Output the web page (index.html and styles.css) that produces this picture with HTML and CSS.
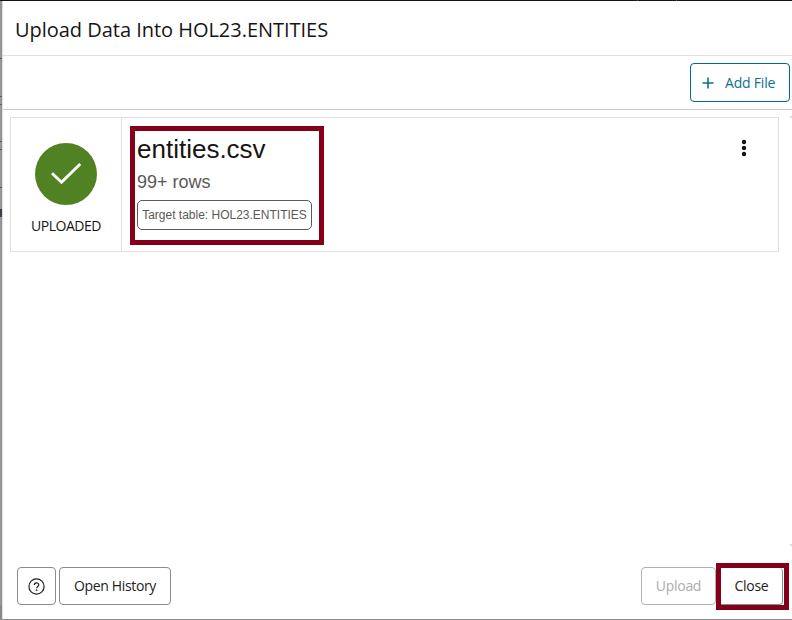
FILE: index.html
```html
<!DOCTYPE html>
<html lang="en">
<head>
<meta charset="utf-8">
<title>Upload Data</title>
<link rel="stylesheet" href="styles.css">
</head>
<body>
<div class="backdrop">
  <i class="mark m1"></i><i class="mark m2"></i><i class="mark m3"></i><i class="mark m4"></i><i class="mark m5"></i><i class="mark m6"></i>
  <i class="mark letter"></i><i class="tick t1"></i><i class="tick t2"></i>
  <main class="dialog">
    <header class="header"><h1 class="title">Upload Data Into HOL23.ENTITIES</h1></header>
    <div class="toolbar">
      <button class="btn add">
        <svg width="12" height="12" viewBox="0 0 12 12"><path d="M6 0.5v11M0.5 6h11" stroke="#0b708f" stroke-width="1.6"/></svg>
        <span class="add-label">Add File</span>
      </button>
    </div>
    <section class="content">
      <article class="card">
        <div class="status">
          <svg class="check" width="62" height="62" viewBox="0 0 62 62"><circle cx="31" cy="31" r="31" fill="#508223"/><path d="M17 30.3l9.5 9L45.2 21" fill="none" stroke="#fff" stroke-width="2.9"/></svg>
          <span class="status-label">UPLOADED</span>
        </div>
        <div class="details">
          <div class="highlight">
            <h2 class="file">entities.csv</h2>
            <p class="rows">99+ rows</p>
            <span class="badge">Target table: HOL23.ENTITIES</span>
          </div>
          <svg class="menu" width="6" height="18" viewBox="0 0 6 18" fill="#161513"><circle cx="3" cy="3" r="2.2"/><circle cx="3" cy="9" r="2.2"/><circle cx="3" cy="15" r="2.2"/></svg>
        </div>
      </article>
      <i class="arrow up"></i><i class="arrow down"></i>
    </section>
    <footer class="footer">
      <button class="btn help"><svg width="17" height="17" viewBox="0 0 17 17" fill="none" stroke="#222" stroke-width="1.2"><circle cx="8.5" cy="8.5" r="7.6"/><path d="M6.3 7C6.3 4.2 10.8 4.3 10.8 6.8C10.8 8.4 8.6 8.5 8.6 10.3"/><circle cx="8.6" cy="12.2" r=".3"/></svg></button>
      <button class="btn history"><span class="history-label">Open History</span></button>
      <button class="btn upload" disabled><span class="upload-label">Upload</span></button>
      <div class="close-highlight"><button class="btn close"><span class="close-label">Close</span></button></div>
    </footer>
  </main>
</div>
</body>
</html>
```
FILE: styles.css
```css
* { box-sizing: border-box; }
body { margin: 0; overflow: hidden; font-family: "Open Sans", "Noto Sans", sans-serif; color: #161513; }
h1, h2, p { margin: 0; font-weight: 400; }
svg { display: block; flex: none; }
span, h1, h2, p { white-space: nowrap; }
.backdrop { position: relative; height: 620px; padding: 1px 0 1px 2px; background: linear-gradient(#161318 1px, #969696 1px, #969696 605px, #8a8a8a 605px); }
.mark { position: absolute; left: 0; width: 2px; height: 1px; background: #5c5c5c; }
.m1 { top: 58px; }
.m2 { top: 96px; }
.m3 { top: 104px; }
.m4 { top: 141px; }
.m5 { top: 149px; }
.m6 { top: 187px; }
.letter { top: 209px; height: 8px; background: linear-gradient(90deg, #27457b, #5c3218); }
.tick { position: absolute; top: 0; width: 1px; height: 1px; background: #55545a; }
.t1 { left: 637px; }
.t2 { left: 676px; }
.dialog { display: flex; flex-direction: column; height: 618px; border-left: 1px solid #dedede; background: #fff; }
.header { display: flex; align-items: center; height: 55px; padding: 4px 0 0 12px; border-bottom: 1px solid #e2e2e2; }
.title { font-size: 20px; line-height: 28px; letter-spacing: -0.03px; }
.toolbar { display: flex; justify-content: flex-end; height: 54px; padding: 7px 2px 0 0; border-bottom: 1px solid #cbcbcb; }
.btn { display: flex; align-items: center; justify-content: center; flex: none; height: 38px; padding: 0; border: 1px solid #8b8b8b; border-radius: 4px; background: #fff; color: #222; font: 14px "Open Sans", "Noto Sans", sans-serif; }
.add { justify-content: flex-start; width: 100px; height: 39px; padding-left: 11px; gap: 11px; border-color: #00688c; color: #0b708f; }
.add-label { letter-spacing: -0.2px; }
.content { position: relative; flex: 1; padding: 7px 13px 0 7px; }
.card { display: flex; height: 135px; border: 1px solid #dfdfdf; }
.status { display: flex; flex-direction: column; align-items: center; width: 111px; padding-top: 25px; border-right: 1px solid #dfdfdf; }
.status-label { margin-top: 11px; font-size: 14px; line-height: 20px; letter-spacing: -0.5px; }
.details { display: flex; flex: 1; justify-content: space-between; padding: 8px 31px 0 8px; font-family: "Liberation Sans", sans-serif; }
.highlight { width: 194px; height: 119px; padding: 3px 0 0 2px; border: 5px solid #840018; }
.file { font-size: 26px; line-height: 30px; }
.rows { margin-top: 8px; font-size: 18px; line-height: 21px; color: #5b5956; }
.badge { display: flex; align-items: center; justify-content: center; width: 175px; height: 30px; margin-top: 7px; border: 1px solid #5b5956; border-radius: 5px; font-size: 12px; color: #5b5956; }
.menu { margin-top: 13px; }
.arrow { position: absolute; right: 0; width: 3px; height: 3px; background: #dedede; }
.up { top: 5px; clip-path: polygon(100% 0, 100% 100%, 0 100%); }
.down { bottom: 10px; clip-path: polygon(0 0, 100% 0, 100% 100%); }
.footer { display: flex; align-items: flex-start; height: 62px; padding: 10px 3px 0 14px; }
.help { width: 39px; padding-right: 1px; }
.history { width: 112px; margin-left: 3px; }
.history-label { letter-spacing: -0.35px; }
.upload { width: 75px; margin-left: auto; border-color: #b1b1b1; color: #acacac; }
.upload-label, .close-label { letter-spacing: -0.3px; }
.history-label, .upload-label { padding-bottom: 1px; }
.close-highlight { width: 73px; height: 47px; margin-top: -4px; padding: 0 1px 0 0; border: 5px solid #840018; }
.close { width: 62px; height: 37px; padding-bottom: 1px; border-width: 0 1px 1px 0; border-radius: 0 4px 4px 0; }
```
